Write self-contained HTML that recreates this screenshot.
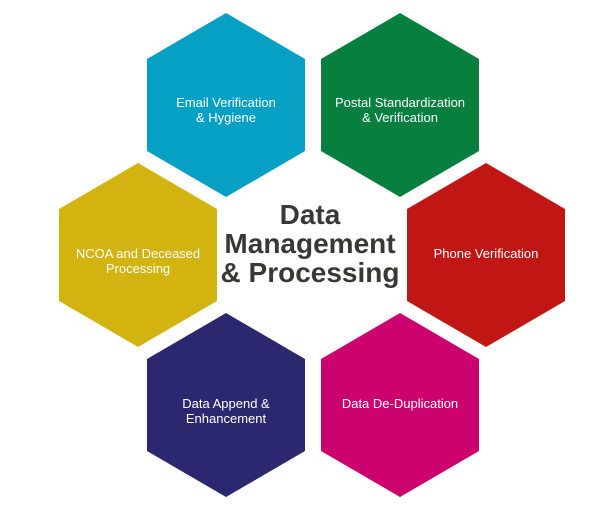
<!DOCTYPE html><html><head><style>
body{margin:0;width:600px;height:513px;background:#fff;overflow:hidden}
svg text{font-family:"Liberation Sans",sans-serif}
</style></head><body>
<svg width="600" height="513" viewBox="0 0 600 513">
<defs><polygon id="h" points="0,-92 79,-46 79,46 0,92 -79,46 -79,-46"/></defs>
<use href="#h" x="226" y="105" fill="#06a0c4"/>
<use href="#h" x="400" y="105" fill="#07803f"/>
<use href="#h" x="138" y="255" fill="#d3b310"/>
<use href="#h" x="486" y="255" fill="#c01614"/>
<use href="#h" x="226" y="405" fill="#2b2870"/>
<use href="#h" x="400" y="405" fill="#cc036f"/>
<g fill="#fff" font-size="13" text-anchor="middle">
<text x="226" y="107">Email Verification</text><text x="226" y="122">&amp; Hygiene</text>
<text x="400" y="107">Postal Standardization</text><text x="400" y="122">&amp; Verification</text>
<text x="138" y="258">NCOA and Deceased</text><text x="138" y="273">Processing</text>
<text x="486" y="258">Phone Verification</text>
<text x="226" y="408">Data Append &amp;</text><text x="226" y="423">Enhancement</text>
<text x="400" y="408">Data De-Duplication</text>
</g>
<g fill="#3a3837" font-size="28" font-weight="bold" text-anchor="middle">
<text x="310" y="224">Data</text>
<text x="310" y="253">Management</text>
<text x="310" y="282">&amp; Processing</text>
</g>
</svg>
</body></html>
